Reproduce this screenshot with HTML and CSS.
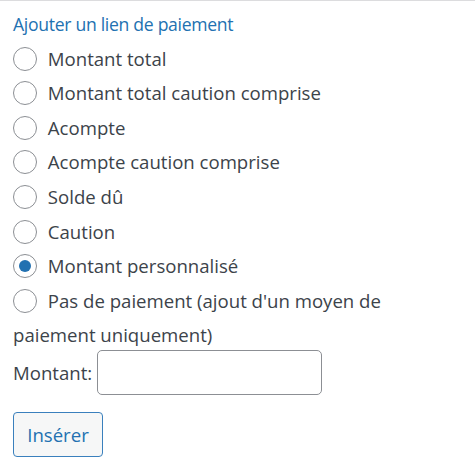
FILE: index.html
```html
<!DOCTYPE html>
<html lang="fr">
<head>
  <meta charset="UTF-8" />
  <title>Lien de paiement</title>
  <link rel="stylesheet" href="styles.css">
</head>
<body>

  <form class="pay-form">
    <div class="pay-title">Ajouter un lien de paiement</div>

    <label class="choice"><input type="radio" name="mode" value="total" /> Montant total</label>
    <label class="choice"><input type="radio" name="mode" value="total_deposit" /> Montant total caution comprise</label>
    <label class="choice"><input type="radio" name="mode" value="advance" /> Acompte</label>
    <label class="choice"><input type="radio" name="mode" value="advance_deposit" /> Acompte caution comprise</label>
    <label class="choice"><input type="radio" name="mode" value="balance" /> Solde dû</label>
    <label class="choice"><input type="radio" name="mode" value="deposit" /> Caution</label>
    <label class="choice"><input type="radio" name="mode" value="custom" checked /> Montant personnalisé</label>
    <label class="choice"><input type="radio" name="mode" value="none" /> Pas de paiement (ajout d'un moyen de paiement uniquement)</label>

    <div class="amount-row">
      <label for="amount">Montant:</label>
      <input type="text" id="amount" class="amount-input" />
    </div>

    <button type="button" class="insert-btn">Insérer</button>
  </form>

</body>
</html>
```

FILE: styles.css
```css
body {
  margin: 0;
  border-top: 1px solid #dcdcde;
  font-family: 'Open Sans', sans-serif;
  font-size: 18.6px;
  color: #3c434a;
  background: #fff;
}

.pay-form {
  padding: 6px 13px 0;
  width: 447px;
}

.pay-title {
  color: #2271b1;
  font-size: 17.6px;
  letter-spacing: -0.3px;
  line-height: 34.6px;
}

.choice {
  display: block;
  line-height: 34.6px;
}

.choice input {
  appearance: none;
  -webkit-appearance: none;
  width: 24px;
  height: 24px;
  margin: 0 6px 0 0;
  border: 1px solid #8c8f94;
  border-radius: 50%;
  background: #fff;
  vertical-align: -5px;
  box-sizing: border-box;
  position: relative;
}

.choice input:checked::before {
  content: "";
  position: absolute;
  left: 5px;
  top: 5px;
  width: 12px;
  height: 12px;
  border-radius: 50%;
  background: #2271b1;
}

.amount-row {
  display: flex;
  align-items: center;
  gap: 5px;
  margin-top: -3px;
}

.amount-input {
  width: 225px;
  height: 45px;
  box-sizing: border-box;
  border: 1px solid #8c8f94;
  border-radius: 5px;
}

.insert-btn {
  margin-top: 17px;
  width: 90px;
  height: 45px;
  font-family: inherit;
  font-size: 18.6px;
  color: #2271b1;
  background: #f6f7f7;
  border: 1px solid #3a80bd;
  border-radius: 4px;
}
```
